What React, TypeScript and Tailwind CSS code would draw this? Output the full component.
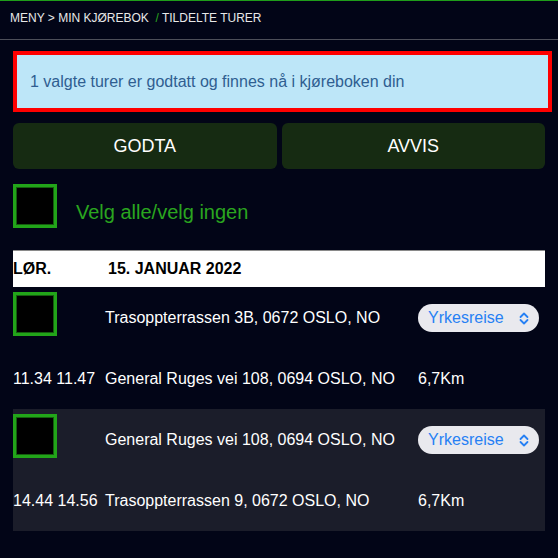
const trips = [
  {
    from: 'Trasoppterrassen 3B, 0672 OSLO, NO',
    to: 'General Ruges vei 108, 0694 OSLO, NO',
    start: '11.34',
    end: '11.47',
    distance: '6,7Km',
    shaded: false,
  },
  {
    from: 'General Ruges vei 108, 0694 OSLO, NO',
    to: 'Trasoppterrassen 9, 0672 OSLO, NO',
    start: '14.44',
    end: '14.56',
    distance: '6,7Km',
    shaded: true,
  },
]

function Checkbox() {
  return (
    <div className="w-[44px] h-[44px] border-[3px] border-[#22a519] bg-black shadow-[inset_0_0_0_1px_#155e0f]" />
  )
}

function UpDownIcon() {
  return (
    <svg width="10" height="13" viewBox="0 0 10 13" fill="none" stroke="#2680f4" strokeWidth="1.8" strokeLinecap="round" strokeLinejoin="round">
      <path d="M1.5 5 L5 1.5 L8.5 5" />
      <path d="M1.5 8 L5 11.5 L8.5 8" />
    </svg>
  )
}

export default function App() {
  return (
    <div className="min-h-[558px] bg-[#020517] text-white font-['Liberation_Sans',Arial,sans-serif]">
      {/* top line */}
      <div className="h-px bg-[#1f9d1a]" />

      {/* breadcrumb */}
      <div className="h-[39px] border-b border-[#4d4f59] px-[10px] pt-[10px] text-[12px] leading-[14px] text-[#e8e8e8]">
        MENY &gt; MIN KJØREBOK <span className="text-[#2aa61f]">&nbsp;/</span> TILDELTE TURER
      </div>

      <div className="px-[13px]">
        {/* alert */}
        <div className="mt-[11px] w-[539px] h-[61px] border-4 border-[#ff0000] bg-[#bde6f8] flex items-center pl-[13px] text-[16px] text-[#2f5e91]">
          1 valgte turer er godtatt og finnes nå i kjøreboken din
        </div>

        {/* actions */}
        <div className="mt-[11px] grid grid-cols-2 gap-[5px]">
          <button className="h-[46px] rounded-md bg-[#162b12] text-[18px] text-white">GODTA</button>
          <button className="h-[46px] rounded-md bg-[#162b12] text-[18px] text-white">AVVIS</button>
        </div>

        {/* select all */}
        <div className="mt-[15px] flex items-start">
          <Checkbox />
          <span className="ml-[19px] mt-[16px] text-[20px] leading-[24px] text-[#2aa61f]">Velg alle/velg ingen</span>
        </div>

        {/* date header */}
        <div className="mt-[22px] h-[37px] bg-white border-t border-[#8a8a8a] grid grid-cols-[95px_1fr] items-center text-[16px] font-bold text-black">
          <span>LØR.</span>
          <span>15. JANUAR 2022</span>
        </div>

        {/* trips */}
        {trips.map((t, i) => (
          <div
            key={i}
            className={`grid grid-cols-[92px_313px_1fr] items-start pb-[20px] text-[16px] leading-[20px] ${t.shaded ? 'bg-[#1b1d2a]' : ''}`}
          >
            <div className="mt-[5px]">
              <Checkbox />
            </div>
            <span className="mt-[21px] whitespace-nowrap">{t.from}</span>
            <div className="mt-[17px] w-[121px] h-[28px] rounded-full bg-[#e9e9ee] flex items-center justify-between pl-[10px] pr-[10px]">
              <span className="text-[16px] text-[#2680f4]">Yrkesreise</span>
              <UpDownIcon />
            </div>

            <span className="mt-[33px] whitespace-nowrap">
              {t.start} {t.end}
            </span>
            <span className="mt-[33px] whitespace-nowrap">{t.to}</span>
            <span className="mt-[33px]">{t.distance}</span>
          </div>
        ))}
      </div>
    </div>
  )
}
